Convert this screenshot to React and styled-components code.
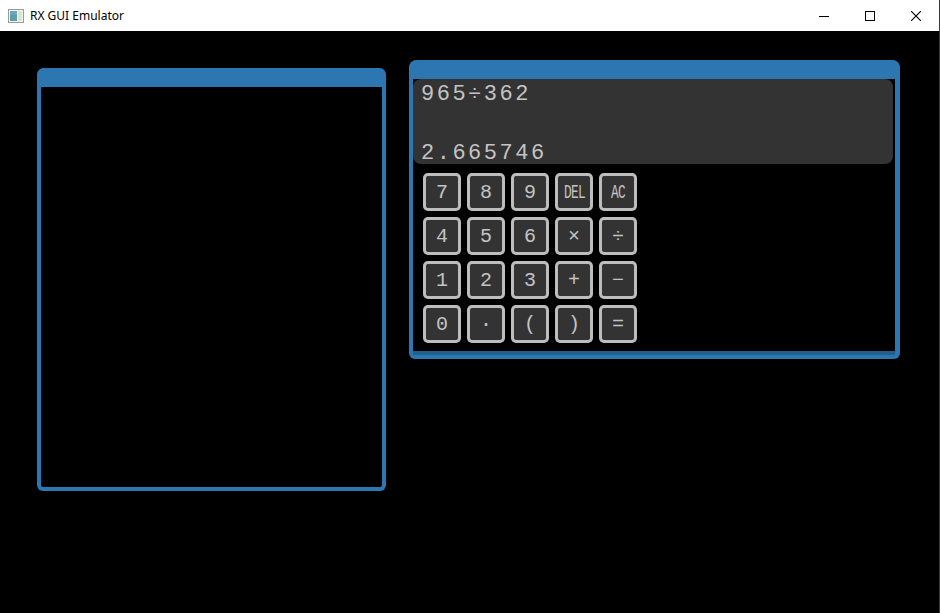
import React from 'react';
import styled, { createGlobalStyle } from 'styled-components';

const keys = [
  ['7', '8', '9', 'DEL', 'AC'],
  ['4', '5', '6', '×', '÷'],
  ['1', '2', '3', '+', '−'],
  ['0', '·', '(', ')', '='],
];

const App = () => (
  <Frame>
    <GlobalStyle />
    <TitleBar>
      <AppIcon viewBox="0 0 16 16">
        <rect x="0.5" y="1.5" width="15" height="13" fill="#f4f4f4" stroke="#9a9a9a" />
        <rect x="2" y="3" width="7" height="10" fill="#5f9ea8" />
        <rect x="2" y="3" width="7" height="4" fill="#6aa4c8" />
        <rect x="10" y="3" width="4" height="10" fill="#d8e6d0" />
      </AppIcon>
      <Title>RX GUI Emulator</Title>
      <Controls>
        <Control>
          <svg width="10" height="10" viewBox="0 0 10 10">
            <path d="M0 5.5h10" stroke="#000" strokeWidth="1" />
          </svg>
        </Control>
        <Control>
          <svg width="10" height="10" viewBox="0 0 10 10">
            <rect x="0.5" y="0.5" width="9" height="9" fill="none" stroke="#000" />
          </svg>
        </Control>
        <Control>
          <svg width="10" height="10" viewBox="0 0 10 10">
            <path d="M0 0L10 10M10 0L0 10" stroke="#000" strokeWidth="1.1" />
          </svg>
        </Control>
      </Controls>
    </TitleBar>
    <Desktop>
      <EmptyWindow>
        <Header />
      </EmptyWindow>
      <CalcWindow>
        <Header />
        <CalcBody>
          <Screen>
            <ScreenLine>965÷362</ScreenLine>
            <ScreenLine>2.665746</ScreenLine>
          </Screen>
          <Keypad>
            {keys.flat().map((k) => (
              <Key key={k}>
                {k.length > 1 ? <Narrow>{k}</Narrow> : k}
              </Key>
            ))}
          </Keypad>
        </CalcBody>
      </CalcWindow>
    </Desktop>
  </Frame>
);

const GlobalStyle = createGlobalStyle`
  html, body {
    margin: 0;
    padding: 0;
    background: #000;
  }
`;

const Frame = styled.div`
  width: 940px;
  height: 613px;
  box-sizing: border-box;
  border-right: 1px solid #3a3a3a;
  background: #000;
  display: flex;
  flex-direction: column;
  overflow: hidden;
`;

const TitleBar = styled.div`
  height: 31px;
  background: #fff;
  display: flex;
  align-items: center;
  flex-shrink: 0;
`;

const AppIcon = styled.svg`
  width: 16px;
  height: 16px;
  margin-left: 8px;
`;

const Title = styled.span`
  margin-left: 6px;
  font-family: 'Noto Sans', 'Open Sans', sans-serif;
  font-size: 12px;
  color: #000;
`;

const Controls = styled.div`
  margin-left: auto;
  display: flex;
  height: 100%;
`;

const Control = styled.div`
  width: 46px;
  height: 100%;
  display: flex;
  align-items: center;
  justify-content: center;
`;

const Desktop = styled.div`
  display: flex;
  align-items: flex-start;
  gap: 23px;
  padding: 29px 0 0 37px;
`;

const Header = styled.div`
  height: 19px;
  background: #2c77b1;
  border-radius: 7px 7px 0 0;
  margin: 0 -4px;
`;

const EmptyWindow = styled.div`
  margin-top: 8px;
  width: 349px;
  height: 423px;
  box-sizing: border-box;
  border: 4px solid #2c77b1;
  border-top: none;
  border-radius: 7px 7px 6px 6px;
  background: #000;
`;

const CalcWindow = styled.div`
  width: 491px;
  box-sizing: border-box;
  border-left: 4px solid #2c77b1;
  border-right: 5px solid #2c77b1;
  border-bottom: 4px solid #2c77b1;
  border-radius: 8px 8px 6px 6px;
  background: #000;

  ${Header} {
    margin: 0 -5px 0 -4px;
    border-radius: 8px 8px 0 0;
  }
`;

const CalcBody = styled.div`
  padding-bottom: 8px;
  border-bottom: 4px solid #215f8f;
`;

const Screen = styled.div`
  width: 480px;
  height: 85px;
  box-sizing: border-box;
  padding: 5px 8px 0;
  background: #333;
  border-radius: 8px;
  display: flex;
  flex-direction: column;
  justify-content: space-between;
`;

const ScreenLine = styled.div`
  font-family: 'Liberation Mono', monospace;
  font-size: 22px;
  line-height: 21px;
  letter-spacing: 2.5px;
  color: #c4c4c4;
`;

const Keypad = styled.div`
  display: grid;
  grid-template-columns: repeat(5, 38px);
  grid-auto-rows: 38px;
  gap: 6px;
  margin: 9px 0 0 10px;
`;

const Key = styled.div`
  box-sizing: border-box;
  border: 3px solid #bdbdbd;
  border-radius: 5px;
  background: #333;
  display: flex;
  align-items: center;
  justify-content: center;
  font-family: 'Liberation Mono', monospace;
  font-size: 20px;
  color: #c4c4c4;
`;

const Narrow = styled.span`
  display: inline-block;
  transform: scaleX(0.64);
  letter-spacing: -1px;
`;

export default App;
